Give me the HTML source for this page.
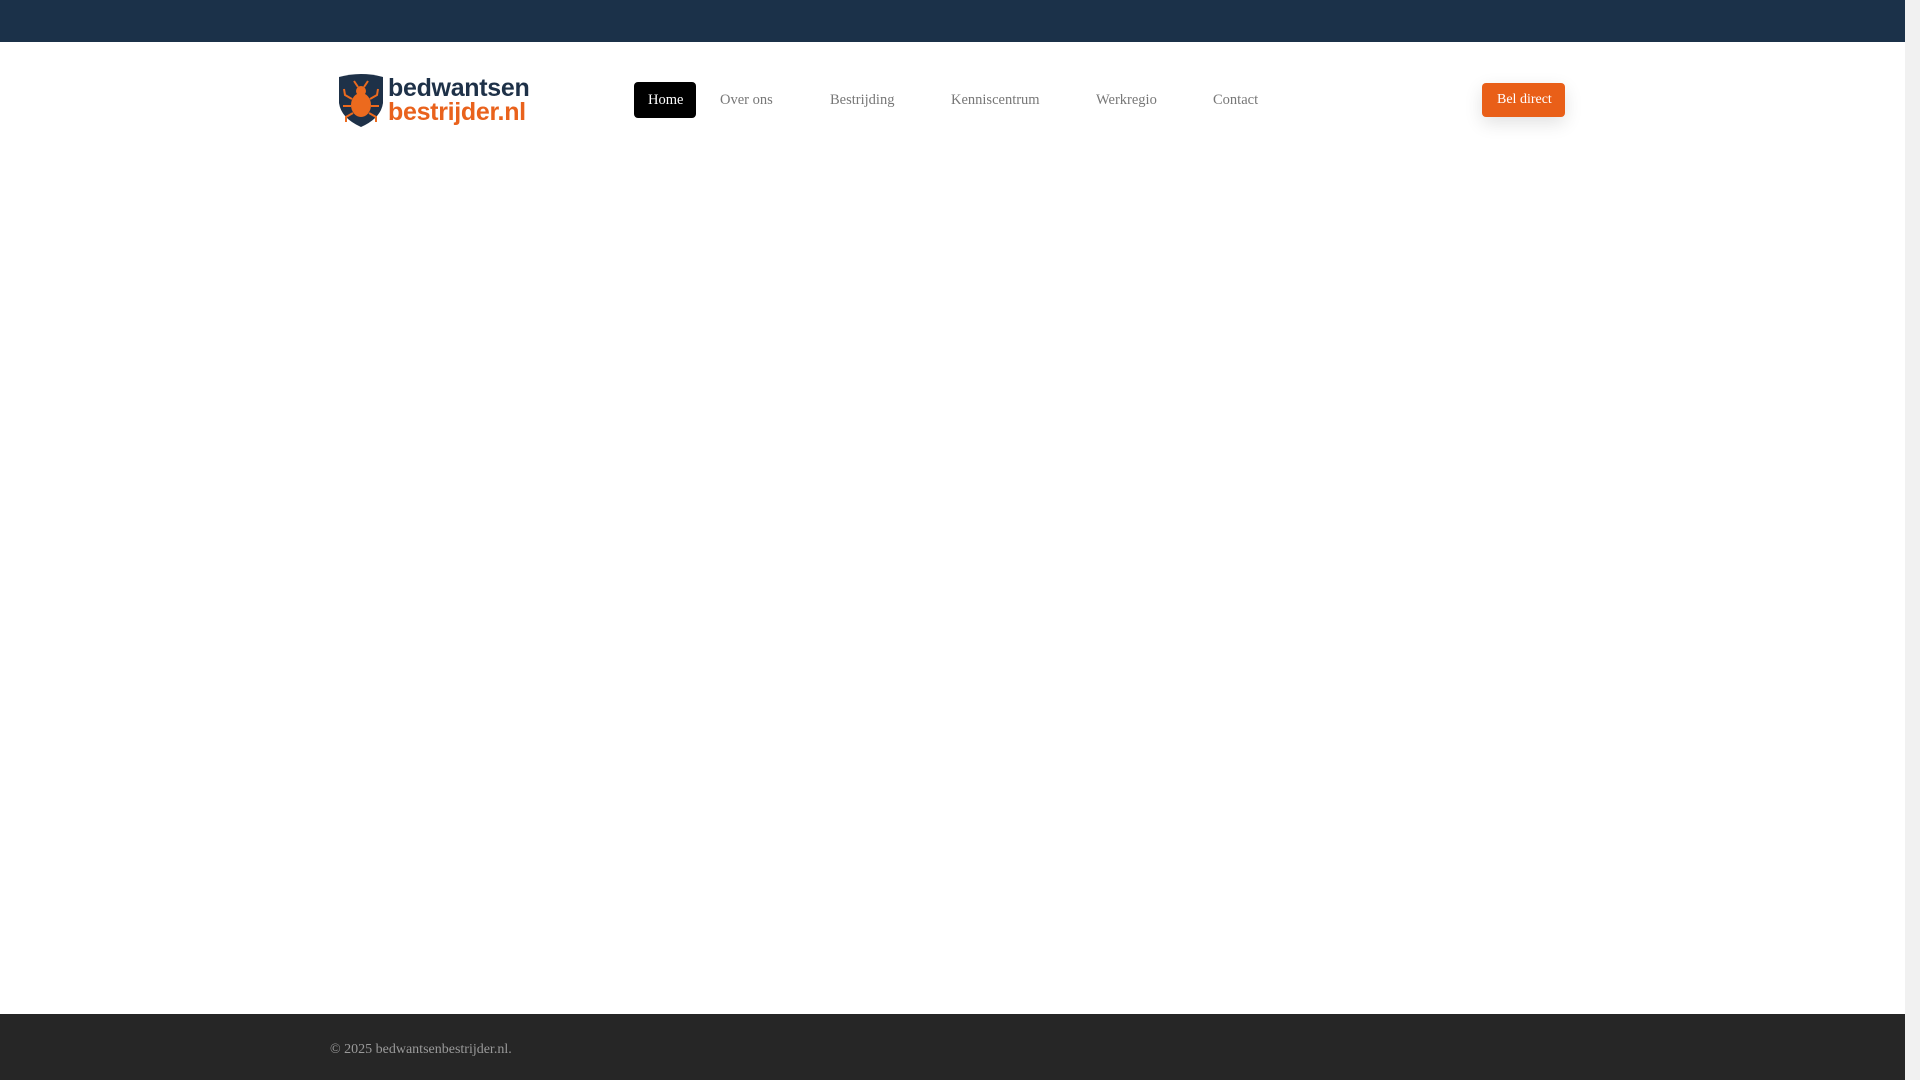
<!DOCTYPE html>
<html><head><meta charset="utf-8"><style>
html,body{margin:0;padding:0;width:1920px;height:1080px;overflow:hidden;background:#fff;font-family:"Liberation Serif",serif}
.top{position:absolute;left:0;top:0;width:1905px;height:42px;background:#1b3149}
.sb{position:absolute;right:0;top:0;width:15px;height:1080px;background:#f1f1f1}
.foot{position:absolute;left:0;top:1014px;width:1905px;height:66px;background:#262626}
.foot span{position:absolute;left:330px;top:28px;font-size:14px;color:#9a9a9a}
.nav{position:absolute;top:92px;font-size:14.5px;color:#777;white-space:nowrap}
.home{position:absolute;left:634px;top:82px;width:62px;height:36px;background:#000;border-radius:4px}
.btn{position:absolute;left:1482px;top:83px;width:83px;height:34px;background:#e95f18;border-radius:4px;box-shadow:0 6px 18px rgba(0,0,0,.12)}
.logo{position:absolute;left:336px;top:73px}
.l1,.l2{position:absolute;left:388px;font-family:"Liberation Sans",sans-serif;font-weight:bold;font-size:25px;letter-spacing:-0.3px}
.l1{top:74px;color:#1e3148}.l2{top:98px;color:#e9621c}
</style></head><body>
<div class="top"></div>
<svg class="logo" width="50" height="55" viewBox="0 0 50 55">
<path d="M3 4 Q25 -2 47 4 L47 30 Q45 45 25 54 Q5 45 3 30 Z" fill="#1e3148"/>
<ellipse cx="25" cy="32" rx="10" ry="12" fill="#ec6a1e"/>
<circle cx="25" cy="18" r="5" fill="#ec6a1e"/>
<g stroke="#ec6a1e" stroke-width="2" fill="none">
<path d="M16 26 L9 22 L8 16"/><path d="M34 26 L41 22 L42 16"/>
<path d="M15 33 L7 33"/><path d="M35 33 L43 33"/>
<path d="M17 40 L10 44 L10 49"/><path d="M33 40 L40 44 L40 49"/>
<path d="M22 14 L18 8"/><path d="M28 14 L32 8"/></g></svg>
<div class="l1">bedwantsen</div><div class="l2">bestrijder.nl</div>
<div class="home"></div>
<div class="nav" style="left:648px;color:#fff">Home</div>
<div class="nav" style="left:720px">Over ons</div>
<div class="nav" style="left:830px">Bestrijding</div>
<div class="nav" style="left:951px">Kenniscentrum</div>
<div class="nav" style="left:1096px">Werkregio</div>
<div class="nav" style="left:1213px">Contact</div>
<div class="btn"></div>
<div class="nav" style="left:1497px;color:#fff;font-size:14px">Bel direct</div>
<div class="foot"><span>© 2025 bedwantsenbestrijder.nl.</span></div>
<div class="sb"></div>
</body></html>
